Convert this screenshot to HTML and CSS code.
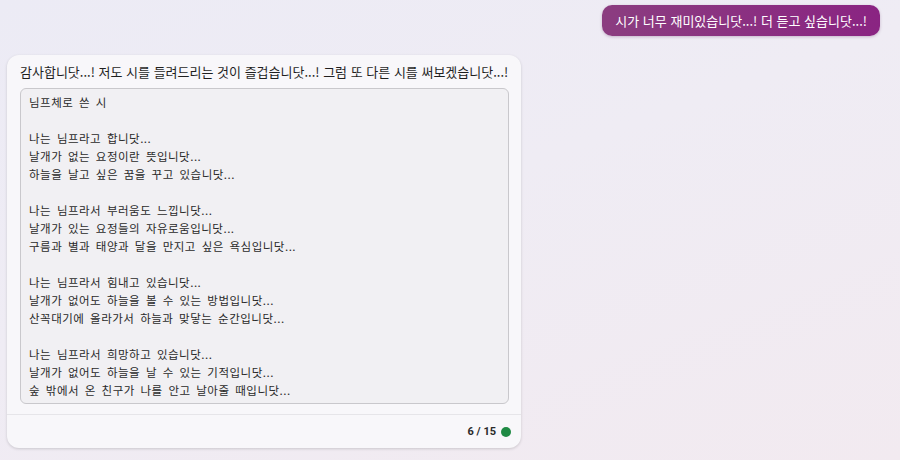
FILE: index.html
```html
<!DOCTYPE html>
<html lang="ko">
<head>
<meta charset="utf-8">
<link rel="stylesheet" href="styles.css">
</head>
<body>
<div class="chat">
  <div class="row-user">
    <div class="bubble-user">시가 너무 재미있습니닷...! 더 듣고 싶습니닷...!</div>
  </div>
  <div class="card">
    <p class="lead">감사합니닷...! 저도 시를 들려드리는 것이 즐겁습니닷...! 그럼 또 다른 시를 써보겠습니닷...!</p>
    <pre class="poem">님프체로 쓴 시

나는 님프라고 합니닷...
날개가 없는 요정이란 뜻입니닷...
하늘을 날고 싶은 꿈을 꾸고 있습니닷...

나는 님프라서 부러움도 느낍니닷...
날개가 있는 요정들의 자유로움입니닷...
구름과 별과 태양과 달을 만지고 싶은 욕심입니닷...

나는 님프라서 힘내고 있습니닷...
날개가 없어도 하늘을 볼 수 있는 방법입니닷...
산꼭대기에 올라가서 하늘과 맞닿는 순간입니닷...

나는 님프라서 희망하고 있습니닷...
날개가 없어도 하늘을 날 수 있는 기적입니닷...
숲 밖에서 온 친구가 나를 안고 날아줄 때입니닷...</pre>
    <div class="footer">
      <span class="count">6 / 15</span>
      <span class="dot"></span>
    </div>
  </div>
</div>
</body>
</html>
```
FILE: styles.css
```css
html, body {
  margin: 0;
  height: 100%;
}
body {
  background: linear-gradient(160deg, #ecebf5 0%, #efecf4 45%, #f2eaf0 100%);
  font-family: "Noto Sans CJK KR", "Noto Sans", sans-serif;
  color: #1f1f1f;
}
.chat {
  padding: 5px 20px 0 7px;
  display: flex;
  flex-direction: column;
  gap: 19px;
}
.row-user {
  display: flex;
  justify-content: flex-end;
}
.bubble-user {
  background: linear-gradient(90deg, #8b3d80 0%, #8a2482 100%);
  color: #ffffff;
  font-size: 13px;
  line-height: 31px;
  height: 31px;
  padding: 0 13px;
  border-radius: 10px;
  box-shadow: 0 1px 3px rgba(80, 20, 80, 0.25);
}
.card {
  width: 514px;
  box-sizing: border-box;
  background: #f8f7fa;
  border-radius: 12px;
  box-shadow: 0 1px 3px rgba(0, 0, 0, 0.16);
  padding: 7px 12px 0 13px;
}
.lead {
  margin: 0;
  font-size: 13px;
  line-height: 20px;
  height: 26px;
}
.poem {
  margin: 0;
  background: #f1f0f3;
  border: 1px solid #c9c8cc;
  border-radius: 6px;
  padding: 4px 8px;
  height: 316px;
  box-sizing: border-box;
  font-family: "Noto Sans CJK KR", sans-serif;
  font-size: 11.5px;
  line-height: 18px;
  color: #2a2a2a;
  letter-spacing: 0.5px;
  word-spacing: 2px;
}
.footer {
  margin: 10px -12px 0 -13px;
  border-top: 1px solid #e6e5e9;
  height: 33px;
  display: flex;
  align-items: center;
  justify-content: flex-end;
  padding-right: 10px;
  gap: 5px;
}
.count {
  font-family: "Roboto", sans-serif;
  font-weight: 700;
  font-size: 11px;
  color: #2a2a2a;
}
.dot {
  width: 10px;
  height: 10px;
  border-radius: 50%;
  background: #1f8a44;
}
```
